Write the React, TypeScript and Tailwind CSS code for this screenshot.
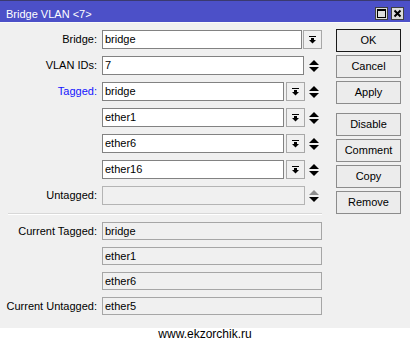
import React from 'react'

function DropIcon() {
  return (
    <svg width="7" height="8" viewBox="0 0 7 8" className="block">
      <rect x="0" y="0" width="7" height="1" fill="#000" />
      <rect x="2" y="2" width="3" height="2" fill="#000" />
      <polygon points="0,4 7,4 3.5,7.5" fill="#000" />
    </svg>
  )
}

function UpDown({ dimTop = false }: { dimTop?: boolean }) {
  return (
    <svg width="10" height="12" viewBox="0 0 10 12" className="block">
      <polygon points="0,5 10,5 5,0" fill={dimTop ? '#8c8c8c' : '#000'} />
      <polygon points="0,7 10,7 5,12" fill="#000" />
    </svg>
  )
}

function Field({ value, className = '' }: { value: string; className?: string }) {
  return (
    <div className={`h-[19px] border border-[#828282] bg-white pl-[2px] leading-[17px] ${className}`}>
      {value}
    </div>
  )
}

function DropBtn() {
  return (
    <div className="h-[19px] w-[19px] border border-[#a8a8a8] bg-[#f0f0f0] flex items-center justify-center">
      <DropIcon />
    </div>
  )
}

function Row({ label, blue, children }: { label?: string; blue?: boolean; children: React.ReactNode }) {
  return (
    <div className="flex items-center h-[19px]">
      <div className={`w-[97px] shrink-0 text-right ${blue ? 'text-[#1414ff]' : 'text-black'}`}>{label}</div>
      <div className="ml-[5px] flex items-center">{children}</div>
    </div>
  )
}

function TaggedRow({ label, value }: { label?: string; value: string }) {
  return (
    <Row label={label} blue={!!label}>
      <Field value={value} className="w-[182px]" />
      <div className="ml-[2px]">
        <DropBtn />
      </div>
      <div className="ml-[4px]">
        <UpDown />
      </div>
    </Row>
  )
}

function CurrentRow({ label, value }: { label?: string; value: string }) {
  return (
    <div className="flex items-center h-[18px]">
      <div className="w-[97px] shrink-0 text-right">{label}</div>
      <div className="ml-[5px] w-[220px] h-[18px] border border-[#a6a6a6] bg-[#f0f0f0] pl-[2px] leading-[16px]">
        {value}
      </div>
    </div>
  )
}

function Btn({ children, primary }: { children: React.ReactNode; primary?: boolean }) {
  return (
    <div
      className={`w-[65px] h-[23px] flex items-center justify-center bg-[#ececec] border ${
        primary ? 'border-[#1a1a1a]' : 'border-[#8c8c8c]'
      }`}
    >
      {children}
    </div>
  )
}

export default function App() {
  return (
    <div className="w-[410px] h-[341px] bg-white font-['Liberation_Sans',Arial,sans-serif] text-[11px] text-black">
      {/* Title bar */}
      <div className="h-[22px] bg-[#4c50c8] border-t border-[#3a3a70] flex">
        <div className="pl-[6px] pt-[7px] leading-[12px] text-white">Bridge VLAN &lt;7&gt;</div>
        <div className="ml-auto mr-[6px] pt-[6px] flex gap-[3px]">
          <div className="w-[13px] h-[13px] bg-[#dcdcdc] border border-[#404040] flex items-center justify-center">
            <svg width="9" height="9" viewBox="0 0 9 9" className="block">
              <rect x="0.5" y="0.5" width="8" height="8" fill="none" stroke="#000" />
              <rect x="0" y="0" width="9" height="2" fill="#000" />
            </svg>
          </div>
          <div className="w-[13px] h-[13px] bg-[#dcdcdc] border border-[#404040] flex items-center justify-center">
            <svg width="9" height="9" viewBox="0 0 9 9" className="block">
              <path d="M1.5 1.5 L7.5 7.5 M7.5 1.5 L1.5 7.5" stroke="#000" strokeWidth="2" />
            </svg>
          </div>
        </div>
      </div>

      {/* Body */}
      <div className="h-[306px] bg-[#f0f0f0] border-t border-[#fafafa] flex">
        <div className="w-[322px] pt-[7px] flex flex-col">
          <div className="flex flex-col gap-[7px]">
            <Row label="Bridge:">
              <Field value="bridge" className="w-[200px]" />
              <div className="ml-[1px]">
                <DropBtn />
              </div>
            </Row>
            <Row label="VLAN IDs:">
              <Field value="7" className="w-[202px]" />
              <div className="ml-[5px]">
                <UpDown />
              </div>
            </Row>
            <TaggedRow label="Tagged:" value="bridge" />
            <TaggedRow value="ether1" />
            <TaggedRow value="ether6" />
            <TaggedRow value="ether16" />
            <Row label="Untagged:">
              <div className="w-[203px] h-[19px] border border-[#b4b4b4] bg-[#f0f0f0]" />
              <div className="ml-[4px]">
                <UpDown dimTop />
              </div>
            </Row>
          </div>

          <div className="mt-[8px] ml-[8px] w-[314px] border-t border-[#d8d8d8] border-b border-b-white" />

          <div className="mt-[7px] flex flex-col gap-[7px]">
            <CurrentRow label="Current Tagged:" value="bridge" />
            <CurrentRow value="ether1" />
            <CurrentRow value="ether6" />
            <CurrentRow label="Current Untagged:" value="ether5" />
          </div>
        </div>

        <div className="ml-[14px] pt-[6px] flex flex-col gap-[3px]">
          <Btn primary>OK</Btn>
          <Btn>Cancel</Btn>
          <Btn>Apply</Btn>
          <div className="mt-[6px] flex flex-col gap-[3px]">
            <Btn>Disable</Btn>
            <Btn>Comment</Btn>
            <Btn>Copy</Btn>
            <Btn>Remove</Btn>
          </div>
        </div>
      </div>

      {/* Footer */}
      <div className="h-[13px] text-center text-[12px] leading-[13px]">www.ekzorchik.ru</div>
    </div>
  )
}
